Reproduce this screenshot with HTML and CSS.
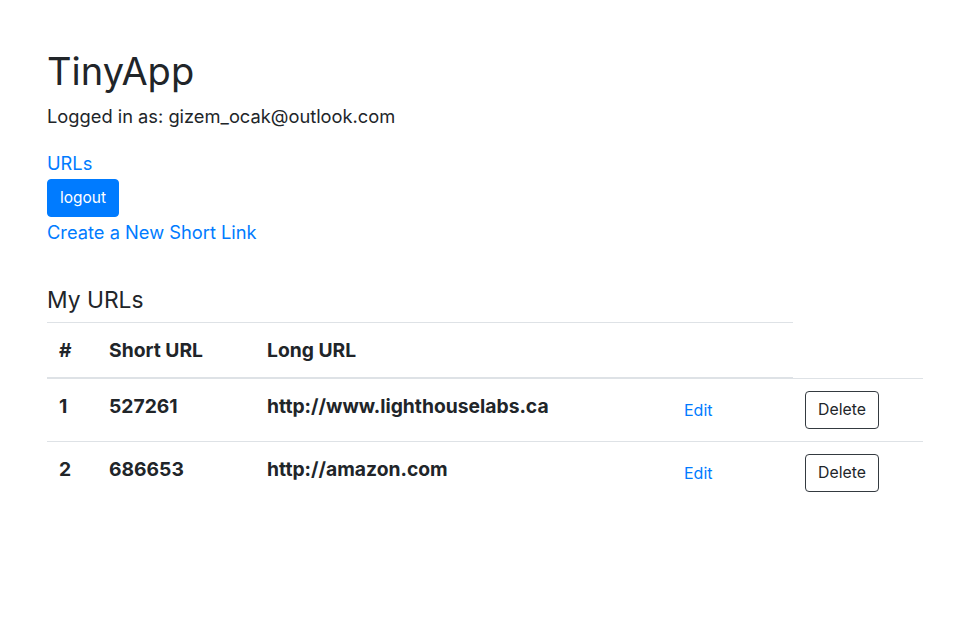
FILE: index.html
```html
<!DOCTYPE html>
<html lang="en">
<head>
<meta charset="utf-8">
<title>TinyApp</title>
<link rel="stylesheet" href="styles.css">
</head>
<body>
<main class="page">
  <h1 class="title">TinyApp</h1>
  <p class="login">Logged in as: gizem_ocak@outlook.com</p>
  <nav class="nav">
    <a class="nav-link" href="#">URLs</a>
    <button class="btn btn-primary btn-logout" type="button">logout</button>
    <a class="nav-link" href="#">Create a New Short Link</a>
  </nav>
  <h4 class="section-title">My URLs</h4>
  <table class="urls">
    <colgroup>
      <col class="c-num"><col class="c-short"><col class="c-long"><col class="c-edit"><col class="c-del">
    </colgroup>
    <thead>
      <tr><th>#</th><th>Short URL</th><th colspan="2">Long URL</th></tr>
    </thead>
    <tbody>
      <tr>
        <td class="strong">1</td>
        <td class="strong">527261</td>
        <td class="strong">http://www.lighthouselabs.ca</td>
        <td><a class="btn-link" href="#">Edit</a></td>
        <td><button class="btn btn-outline" type="button">Delete</button></td>
      </tr>
      <tr>
        <td class="strong">2</td>
        <td class="strong">686653</td>
        <td class="strong">http://amazon.com</td>
        <td><a class="btn-link" href="#">Edit</a></td>
        <td><button class="btn btn-outline" type="button">Delete</button></td>
      </tr>
    </tbody>
  </table>
</main>
</body>
</html>
```
FILE: styles.css
```css
* { box-sizing: border-box; }
body {
  margin: 0;
  font-family: Inter, "Liberation Sans", sans-serif;
  color: #212529;
  background: #fff;
  font-size: 16px;
  line-height: 1.5;
}
.page {
  padding: 47px 47px 0 47px;
}
.title {
  margin: 0 0 8px 0;
  font-size: 38px;
  font-weight: 400;
  line-height: 48px;
}
.login {
  margin: 0 0 18px 0;
  font-size: 18.3px;
  line-height: 27px;
}
.nav { display: flex; flex-direction: column; align-items: flex-start; }
.nav-link {
  color: #007bff;
  text-decoration: none;
  font-size: 18.3px;
  line-height: 30px;
}
.btn {
  display: inline-block;
  font-family: inherit;
  font-size: 16px;
  line-height: 24px;
  padding: 6px 12px;
  border: 1px solid transparent;
  border-radius: 4px;
  cursor: pointer;
}
.btn-logout { margin-top: 1px; font-size: 15.5px; }
.btn-primary { background: #007bff; border-color: #007bff; color: #fff; }
.btn-outline { background: #fff; border-color: #343a40; color: #212529; font-size: 15.8px; }
.section-title {
  margin: 39px 0 8px 0;
  font-size: 22.8px;
  font-weight: 400;
  line-height: 28px;
}
.urls {
  width: 876px;
  table-layout: fixed;
  border-collapse: collapse;
  font-size: 19.3px;
  line-height: 30px;
}
.c-num { width: 50px; }
.c-short { width: 158px; }
.c-long { width: 405px; }
.c-edit { width: 133px; }
.c-del { width: 130px; }
.urls th, .urls td {
  padding: 12px;
  text-align: left;
  vertical-align: top;
  border-top: 1px solid #dee2e6;
}
.urls th { font-weight: 700; }
.urls thead th { border-bottom: 2px solid #dee2e6; }
.urls .strong { font-weight: 700; }
.btn-link {
  display: inline-block;
  padding: 7px 12px;
  font-size: 16px;
  line-height: 24px;
  color: #007bff;
  text-decoration: none;
}
```
